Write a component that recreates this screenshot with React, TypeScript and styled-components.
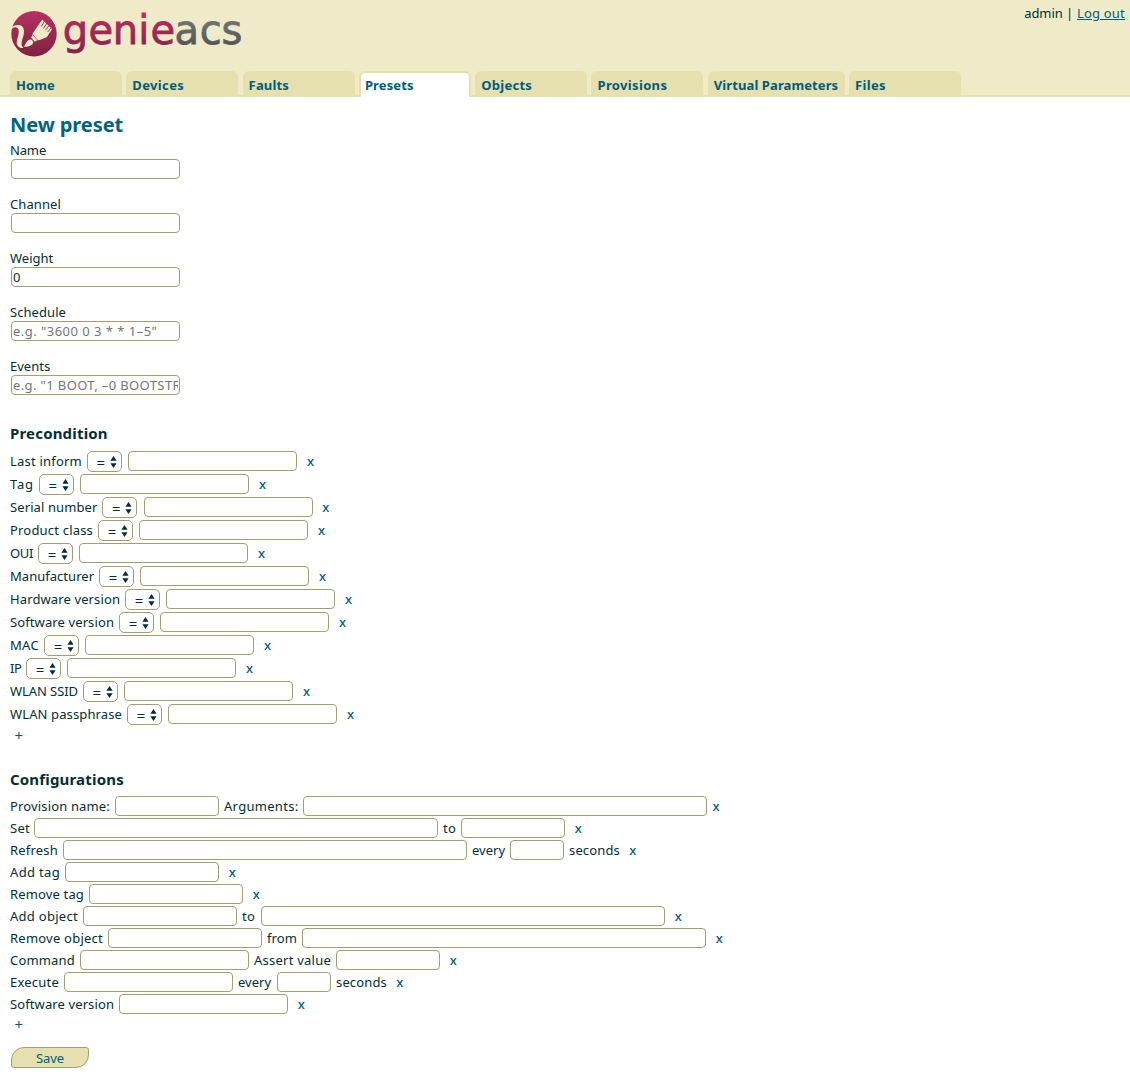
import React from "react";
import styled, { createGlobalStyle } from "styled-components";

const ink = "#022f35";
const link = "#005c7d";
const edge = "#a39d75";
const cream = "#efebc9";
const sand = "#e5e0ae";

const Global = createGlobalStyle`
  *, *::before, *::after { box-sizing: border-box; }
  body { margin: 0; background: #fff; }
`;

const Page = styled.div`
  min-height: 1078px;
  color: ${ink};
  font: 13px/20px "Noto Sans", "Open Sans", sans-serif;
  letter-spacing: 0.15px;
`;

const Header = styled.header`
  height: 97px;
  background: ${cream};
  border-bottom: 2px solid ${sand};
  display: flex;
  flex-direction: column;
  justify-content: space-between;
`;

const TopBar = styled.div`
  display: flex;
  justify-content: space-between;
  align-items: flex-start;
  height: 60px;
  padding-right: 5px;
`;

const Logo = styled.svg`
  display: block;
  width: 250px;
  height: 60px;
`;

const UserMenu = styled.div`
  display: flex;
  gap: 4px;
  padding-top: 3px;
  white-space: pre;
  letter-spacing: -0.1px;
`;

const LogOut = styled.a`
  color: ${link};
  letter-spacing: 0.2px;
  text-decoration: underline;
  text-underline-offset: 1px;
`;

const Tabs = styled.nav`
  display: flex;
  gap: 4.3px;
  height: 24px;
  padding-left: 10px;
`;

const Tab = styled.a<{ $active?: boolean; $width?: number; $track: number }>`
  width: ${(p) => p.$width ?? 112}px;
  height: ${(p) => (p.$active ? 26 : 24)}px;
  padding: ${(p) => (p.$active ? "3px 4px 0" : "5px 6px 0")};
  border: ${(p) => (p.$active ? `2px solid ${sand}` : "0")};
  border-bottom: 0;
  border-radius: 6px 6px 0 0;
  background: ${(p) => (p.$active ? "#fff" : sand)};
  color: ${link};
  font-weight: bold;
  line-height: 18px;
  letter-spacing: ${(p) => p.$track}px;
  white-space: nowrap;
`;

const Main = styled.main`
  padding: 14px 10px 0;
`;

const Title = styled.h1`
  margin: 0 0 1px;
  color: #006384;
  font-size: 20px;
  line-height: 28px;
  letter-spacing: -0.08px;
`;

const Section = styled.section`
  padding-top: 13px;
  & + & { padding-top: 26px; }
`;

const SectionTitle = styled.h2<{ $gap: number }>`
  margin: 0 0 ${(p) => p.$gap}px;
  font-size: 15px;
  line-height: 20px;
  letter-spacing: 0.18px;
`;

const Field = styled.label<{ $track: number }>`
  display: block;
  height: 54px;
  padding-top: 1px;
  line-height: 18px;
  letter-spacing: ${(p) => p.$track}px;
`;

const Input = styled.input<{ $width?: number; $track?: number }>`
  display: block;
  flex: none;
  width: ${(p) => p.$width ?? 169}px;
  height: 20px;
  margin: 0;
  padding: 0 1px;
  border: 1px solid ${edge};
  border-radius: 4px;
  background: #fff;
  color: ${ink};
  font: inherit;
  letter-spacing: ${(p) => p.$track ?? 0}px;
  outline: none;
  ${Field} & { margin-left: 1px; }
  &::placeholder { color: #757575; opacity: 1; }
`;

const Row = styled.div<{ $height: number }>`
  display: flex;
  align-items: flex-start;
  height: ${(p) => p.$height}px;
`;

const Copy = styled.span<{ $width: number; $track: number }>`
  flex: none;
  width: ${(p) => p.$width}px;
  letter-spacing: ${(p) => p.$track}px;
  white-space: nowrap;
  ${Input} + & { margin-left: 5px; }
`;

const Select = styled.button`
  flex: none;
  display: flex;
  align-items: center;
  justify-content: space-between;
  width: 35px;
  height: 21px;
  margin-right: 6.2px;
  padding: 0 4px 0 8.5px;
  border: 1px solid ${edge};
  border-radius: 5px;
  background: #fff;
  color: ${ink};
  font: inherit;
  line-height: 19px;
  letter-spacing: 0;
`;

const Operator = styled.span`
  padding-top: 1px;
  font-size: 15px;
  line-height: 18px;
`;

const Remove = styled.a<{ $gap?: number }>`
  margin-left: ${(p) => p.$gap ?? 9.7}px;
  color: ${link};
  font-weight: 500;
`;

const Add = styled.a`
  display: block;
  padding-left: 4.5px;
  color: ${link};
  font-size: 15px;
  line-height: 16px;
`;

const Save = styled.button`
  display: block;
  width: 78px;
  height: 21px;
  margin: 15px 0 0 1px;
  padding: 1px 0 0;
  border: 1px solid ${edge};
  border-radius: 13px 3px 13px 3px;
  background: ${sand};
  color: ${link};
  font: inherit;
  line-height: 18px;
  letter-spacing: -0.05px;
`;

const tabs = [
  { name: "Home", track: 0.12 },
  { name: "Devices", track: 0.36 },
  { name: "Faults", track: 0.15 },
  { name: "Presets", track: 0.12, active: true },
  { name: "Objects", track: 0.28 },
  { name: "Provisions", track: 0.35 },
  { name: "Virtual Parameters", track: 0.1, width: 136.9 },
  { name: "Files", track: 0.36 },
];

const fields = [
  { name: "Name", track: -0.15 },
  { name: "Channel", track: 0.1 },
  { name: "Weight", track: 0, value: "0" },
  { name: "Schedule", track: 0.07, hint: 'e.g. "3600 0 3 * * 1–5"', hintTrack: 0.47 },
  { name: "Events", track: 0, hint: 'e.g. "1 BOOT, –0 BOOTSTRAP"', hintTrack: 0.38 },
];

const preconditions: [string, number, number][] = [
  ["Last inform", 77, 0.21],
  ["Tag", 29, 0.7],
  ["Serial number", 92.4, 0.1],
  ["Product class", 88.2, 0.19],
  ["OUI", 28.2, -0.35],
  ["Manufacturer", 89.2, 0.03],
  ["Hardware version", 115.2, 0.12],
  ["Software version", 109.2, 0.11],
  ["MAC", 34.2, 0.32],
  ["IP", 16.2, -0.5],
  ["WLAN SSID", 73.1, -0.07],
  ["WLAN passphrase", 117.2, 0.12],
];

type Part = { text: string; width: number; track: number } | { input: number };
const t = (text: string, width: number, track: number): Part => ({ text, width, track });
const i = (input: number): Part => ({ input });

const configurations: { parts: Part[]; gap?: number }[] = [
  { parts: [t("Provision name:", 105, 0.15), i(104), t("Arguments:", 79, 0.3), i(404)], gap: 5.5 },
  { parts: [t("Set", 24, 0.28), i(404), t("to", 18, 0.22), i(104)] },
  { parts: [t("Refresh", 53, 0.2), i(404), t("every", 38, 0), i(54), t("seconds", 56, 0.15)], gap: 4.2 },
  { parts: [t("Add tag", 55, 0.33), i(154)] },
  { parts: [t("Remove tag", 79, 0.15), i(154)] },
  { parts: [t("Add object", 73, 0.28), i(154), t("to", 19, 0.22), i(404)] },
  { parts: [t("Remove object", 98, 0.23), i(154), t("from", 35, 0.1), i(404)] },
  { parts: [t("Command", 70, 0.18), i(169), t("Assert value", 82, 0.24), i(104)] },
  { parts: [t("Execute", 54, 0.22), i(169), t("every", 39, 0), i(54), t("seconds", 56, 0.15)], gap: 4.2 },
  { parts: [t("Software version", 109, 0.11), i(169)] },
];

function Brand() {
  return (
    <Logo viewBox="0 0 250 60" role="img" aria-label="genieacs">
      <defs>
        <linearGradient id="disc" x1="0" y1="11" x2="0" y2="57" gradientUnits="userSpaceOnUse">
          <stop offset="0" stopColor="#b93063" />
          <stop offset="1" stopColor="#7c2141" />
        </linearGradient>
        <linearGradient id="wine" x1="0" y1="14" x2="0" y2="53" gradientUnits="userSpaceOnUse">
          <stop offset="0" stopColor="#bd2b60" />
          <stop offset="1" stopColor="#83224a" />
        </linearGradient>
        <linearGradient id="slate" x1="0" y1="22" x2="0" y2="45" gradientUnits="userSpaceOnUse">
          <stop offset="0" stopColor="#717171" />
          <stop offset="1" stopColor="#545557" />
        </linearGradient>
        <clipPath id="round">
          <circle cx="34" cy="33.8" r="23.4" />
        </clipPath>
      </defs>
      <circle cx="34" cy="33.8" r="22.7" fill="url(#disc)" />
      <g clipPath="url(#round)" fill={cream}>
        <path d="M10 28.5C12.5 26 15.5 24.9 18.2 25C22.5 25.2 24.2 28 24 32.2C23.8 36.2 21.8 39.6 21.6 43C21.5 44.6 21.6 45.8 22.6 46.8L23.4 48C19.7 48.5 16.8 46 16.7 42.4C16.6 38.4 19.1 35.1 18.8 31.2C18.6 28.5 17.2 27.2 14.8 27.3C12.9 27.4 11.3 29 10.5 31.5Z" />
        <path d="M23.6 46.6C25.2 45.6 25.6 43 27.5 41.1C29.1 39.6 30.8 39.3 31.8 39.9C33.5 41 33.7 43 32.2 44.4C29.8 46.6 26.4 46.8 23.6 46.6Z" />
        <path d="M32.3 34.1L42.2 19.4L52 29L47 37L39.8 39.9L36.4 40.4L34.8 41.9L31 37.3L32.5 35.8Z" />
      </g>
      <g stroke="#a92c59" strokeWidth="0.95" fill="none">
        <path d="M41.3 26.6L44.7 20.8M43.4 28.5L47 23M45.5 30.3L49.2 25.4M47.6 32L51.2 27.8" />
        <path d="M32.6 34.4L37.6 40.2" strokeWidth="0.7" />
      </g>
      <g fontFamily="DejaVu Sans, sans-serif" fontSize="40" strokeWidth="0.8" letterSpacing="0">
        <text x="62.8 88.5 112.7 138.2 150.5" y="44.2" fill="url(#wine)" stroke="url(#wine)">
          genie
        </text>
        <text x="174.6 199.8 221.4" y="44.2" fill="url(#slate)" stroke="url(#slate)">
          acs
        </text>
      </g>
    </Logo>
  );
}

function Arrows() {
  return (
    <svg width="7" height="12" viewBox="0 0 7 12" fill={ink}>
      <path d="M3.5 0L6.6 4.8H.4ZM3.5 12L.4 7.2H6.6Z" />
    </svg>
  );
}

export default function App() {
  return (
    <Page>
      <Global />
      <Header>
        <TopBar>
          <Brand />
          <UserMenu>
            <span>admin |</span>
            <LogOut>Log out</LogOut>
          </UserMenu>
        </TopBar>
        <Tabs>
          {tabs.map((tab) => (
            <Tab key={tab.name} $active={tab.active} $width={tab.width} $track={tab.track}>
              {tab.name}
            </Tab>
          ))}
        </Tabs>
      </Header>
      <Main>
        <Title>New preset</Title>
        {fields.map((f) => (
          <Field key={f.name} $track={f.track}>
            {f.name}
            <Input defaultValue={f.value} placeholder={f.hint} $track={f.hintTrack} />
          </Field>
        ))}
        <Section>
          <SectionTitle $gap={8}>Precondition</SectionTitle>
          {preconditions.map(([name, width, track]) => (
            <Row key={name} $height={23}>
              <Copy $width={width} $track={track}>{name}</Copy>
              <Select type="button">
                <Operator>=</Operator>
                <Arrows />
              </Select>
              <Input />
              <Remove>x</Remove>
            </Row>
          ))}
          <Add>+</Add>
        </Section>
        <Section>
          <SectionTitle $gap={7}>Configurations</SectionTitle>
          {configurations.map((row, r) => (
            <Row key={r} $height={22}>
              {row.parts.map((part, n) =>
                "text" in part ? (
                  <Copy key={n} $width={part.width} $track={part.track}>
                    {part.text}
                  </Copy>
                ) : (
                  <Input key={n} $width={part.input} />
                )
              )}
              <Remove $gap={row.gap}>x</Remove>
            </Row>
          ))}
          <Add>+</Add>
        </Section>
        <Save type="button">Save</Save>
      </Main>
    </Page>
  );
}
